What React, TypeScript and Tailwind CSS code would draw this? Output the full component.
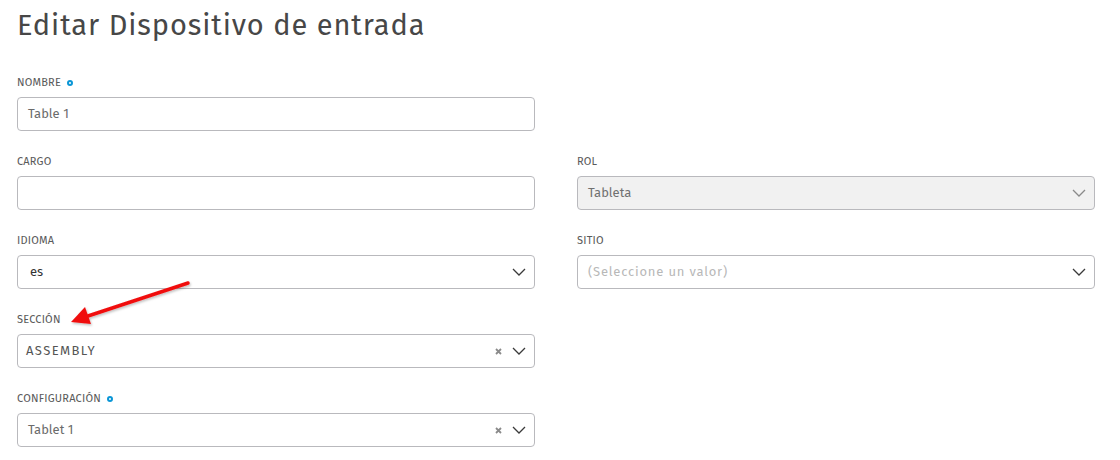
import React from "react";

const font = { fontFamily: '"Fira Sans", "Noto Sans", "Open Sans", sans-serif' };

function Chevron({ light }: { light?: boolean }) {
  return (
    <svg width="14" height="8" viewBox="0 0 14 8" className="shrink-0">
      <path d="M1 1 L7 7 L13 1" fill="none" stroke={light ? "#8a8a8a" : "#3a3a3a"} strokeWidth="1.3" />
    </svg>
  );
}

function Clear() {
  return (
    <svg width="7" height="7" viewBox="0 0 7 7" className="shrink-0 mr-[10px]">
      <path d="M1 1 L6 6 M6 1 L1 6" stroke="#8a8a8a" strokeWidth="1.8" />
    </svg>
  );
}

function Label({ text, req }: { text: string; req?: boolean }) {
  return (
    <div className="h-[16px] flex items-center text-[11px] text-[#5a5a5a] tracking-[0.2px] pt-[2px]">
      <span>{text}</span>
      {req && <span className="ml-[6px] w-[6px] h-[6px] rounded-full border-[2px] border-[#0a96d6] inline-block" />}
    </div>
  );
}

function Field({
  label,
  req,
  value,
  kind,
  valueClass,
  disabled,
  clear,
}: {
  label: string;
  req?: boolean;
  value?: string;
  kind: "input" | "select";
  valueClass?: string;
  disabled?: boolean;
  clear?: boolean;
}) {
  return (
    <div className="flex flex-col gap-[7px]">
      <Label text={label} req={req} />
      <div
        className={`h-[34px] rounded-[4px] border border-[#b9b9bd] flex items-center pl-[10px] pr-[8px] ${
          disabled ? "bg-[#f1f1f1]" : "bg-white"
        }`}
      >
        <span className={`flex-1 text-[13px] ${valueClass ?? "text-[#666]"}`}>{value}</span>
        {clear && <Clear />}
        {kind === "select" && <Chevron light={disabled} />}
      </div>
    </div>
  );
}

export default function App() {
  return (
    <div className="relative w-[1120px] h-[460px] bg-white pl-[17px]" style={font}>
      <div className="h-[74px] pt-[7px]">
        <h1 className="text-[29px] leading-[38px] text-[#474747] tracking-[0.9px]">Editar Dispositivo de entrada</h1>
      </div>
      <div className="grid grid-cols-[518px_518px] gap-x-[42px] gap-y-[22px]">
        <Field label="NOMBRE" req kind="input" value="Table 1" valueClass="text-[#6b6b6b]" />
        <div />
        <Field label="CARGO" kind="input" />
        <Field label="ROL" kind="select" value="Tableta" disabled valueClass="text-[#707070]" />
        <Field label="IDIOMA" kind="select" value="es" valueClass="text-[#333] pl-[2px]" />
        <Field
          label="SITIO"
          kind="select"
          value="(Seleccione un valor)"
          valueClass="text-[#b8b8b8] tracking-[0.8px]"
        />
        <Field label="SECCIÓN" kind="select" value="ASSEMBLY" clear valueClass="text-[#555] tracking-[1.4px] -ml-[2px]" />
        <div />
        <Field label="CONFIGURACIÓN" req kind="select" value="Tablet 1" clear valueClass="text-[#6b6b6b]" />
      </div>
      <svg className="absolute left-0 top-0 pointer-events-none" width="1120" height="460">
        <defs>
          <filter id="sh" x="-20%" y="-20%" width="140%" height="140%">
            <feDropShadow dx="1" dy="1.5" stdDeviation="1" floodColor="#000" floodOpacity="0.25" />
          </filter>
        </defs>
        <g filter="url(#sh)">
          <line x1="188" y1="283" x2="88" y2="316" stroke="#f01010" strokeWidth="3.5" strokeLinecap="round" />
          <polygon points="71,322 85,307 91,324" fill="#f01010" />
        </g>
      </svg>
    </div>
  );
}
